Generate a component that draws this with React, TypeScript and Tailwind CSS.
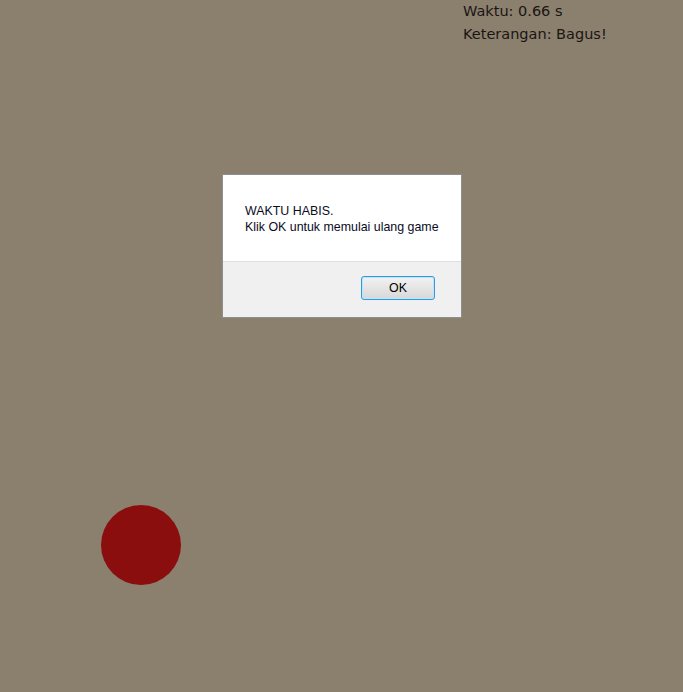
export default function App() {
	return (
		<div className="relative h-[692px] w-[683px] overflow-hidden bg-[#8b7f6e]">
			{/* Score panel */}
			<div className="absolute left-[463px] top-0 font-['Comic_Sans_MS','DejaVu_Sans',sans-serif] text-[14.5px] font-medium leading-[23px] text-[#1a1612]">
				<p>Waktu: 0.66 s</p>
				<p>Keterangan: Bagus!</p>
			</div>

			{/* Ball */}
			<div className="absolute left-[101px] top-[505px] h-[80px] w-[80px] rounded-full bg-[#8b0e0e]" />

			{/* Alert dialog */}
			<div className="absolute left-[222px] top-[174px] flex h-[144px] w-[240px] flex-col border border-[#8e8e8e] bg-white font-['Liberation_Sans',Arial,sans-serif] text-[12.4px] leading-[16px] text-[#0b0b1e]">
				<div className="flex h-[86px] flex-col justify-center px-[22px] pt-[2px]">
					<p>WAKTU HABIS.</p>
					<p>Klik OK untuk memulai ulang game</p>
				</div>
				<div className="flex flex-1 items-start justify-end border-t border-[#dfdfdf] bg-[#f0f0f0] pr-[26px] pt-[14px]">
					<button className="h-[24px] w-[74px] rounded-[3px] border border-[#3399dd] bg-gradient-to-b from-[#f2f2f2] to-[#d8d8d8] text-[12.4px] text-black shadow-[inset_0_0_0_1px_#b8e6fb]">
						OK
					</button>
				</div>
			</div>
		</div>
	);
}
